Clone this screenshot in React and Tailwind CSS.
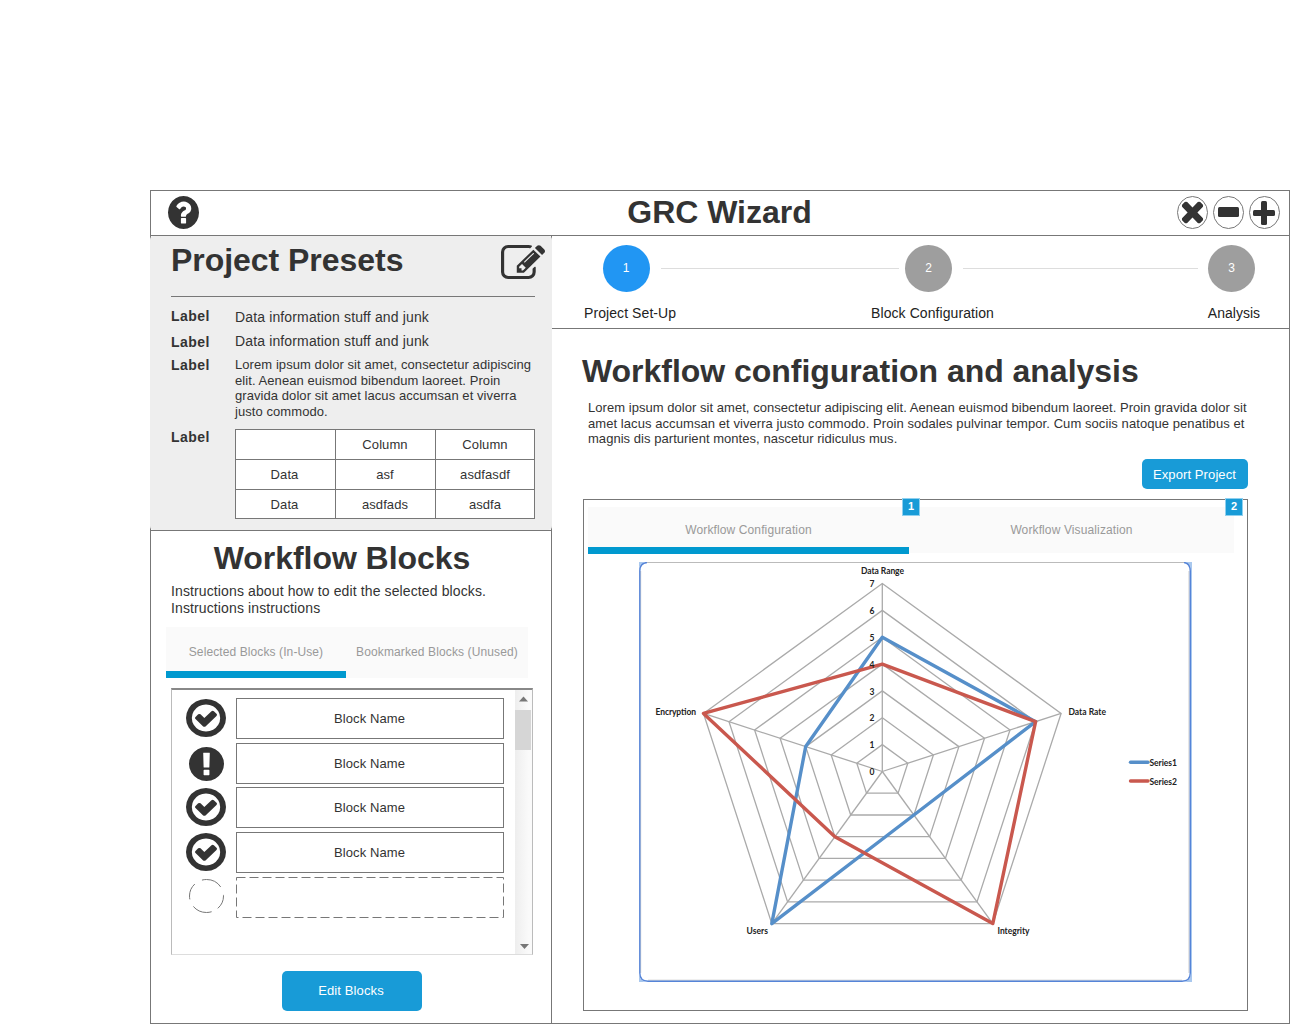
import React from "react";

const CHECK =
  "M1299 813l-422 422q-19 19-45 19t-45-19l-294-294q-19-19-19-45t19-45l102-102q19-19 45-19t45 19l147 147 275-275q19-19 45-19t45 19l102 102q19 19 19 45t-19 45zm141 83q0-148-73-273t-198-198-273-73-273 73-198 198-73 273 73 273 198 198 273 73 273-73 198-198 73-273zm224 0q0 209-103 385.5T1281.5 1561 896 1664t-385.5-103T231 1281.5 128 896t103-385.5T510.5 231 896 128t385.5 103T1561 510.5 1664 896z";
const ALERT =
  "M896 128q209 0 385.500 103T1561 510.500 1664 896t-103 385.500-279.500 279.500T896 1664t-385.500-103T231 1281.500 128 896t103-385.500T510.500 231 896 128zm128 1247v-190q0-14-9-23.500t-22-9.500H801q-13 0-23 10t-10 23v190q0 13 10 23t23 10h192q13 0 22-9.500t9-23.500zm-2-344l18-621q0-12-10-18-10-8-24-8H786q-14 0-24 8-10 6-10 18l17 621q0 10 10 17.500t24 7.500h185q14 0 23.500-7.500t10.500-17.500z";
const HELP =
  "M1024 1376v-192q0-14-9-23t-23-9H800q-14 0-23 9t-9 23v192q0 14 9 23t23 9h192q14 0 23-9t9-23zm256-672q0-88-55.500-163T1086 425t-170-41q-243 0-371 213-15 24 8 42l132 100q7 6 19 6 16 0 25-12 53-68 86-92 34-24 86-24 48 0 85.500 26t37.500 59q0 38-20 61t-68 45q-63 28-115.500 86.500T768 1020v36q0 14 9 23t23 9h192q14 0 23-9t9-23q0-19 21.500-49.500T1100 957q32-18 49-28.500t46-35 44.500-48 28-60.500 12.500-81zm384 192q0 209-103 385.500T1281.500 1561 896 1664t-385.500-103T231 1281.500 128 896t103-385.500T510.500 231 896 128t385.500 103T1561 510.500 1664 896z";
const EDIT =
  "M888 1184l116-116-152-152-116 116v56h96v96h56zm440-720q-16-16-33 1L945 815q-17 17-1 33t33-1l350-350q17-17 1-33zm80 594v190q0 119-84.500 203.500T1120 1536H288q-119 0-203.500-84.500T0 1248V416q0-119 84.500-203.500T288 128h832q63 0 117 25 15 7 18 23 3 17-9 29l-49 49q-14 14-32 8-23-6-45-6H288q-66 0-113 47t-47 113v832q0 66 47 113t113 47h832q66 0 113-47t47-113v-126q0-13 9-22l64-64q15-15 35-7t20 29zm-96-738l288 288-672 672H640V992zm444 132l-92 92-288-288 92-92q28-28 68-28t68 28l152 152q28 28 28 68t-28 68z";
const TIMES =
  "M1490 1322q0 40-28 68l-136 136q-28 28-68 28t-68-28l-294-294-294 294q-28 28-68 28t-68-28l-136-136q-28-28-28-68t28-68l294-294-294-294q-28-28-28-68t28-68l136-136q28-28 68-28t68 28l294 294 294-294q28-28 68-28t68 28l136 136q28 28 28 68t-28 68l-294 294 294 294q28 28 28 68z";

function Glyph({ d, box = "128 128 1536 1536", className }) {
  return (
    <svg viewBox={box} preserveAspectRatio="none" className={className} fill="#333">
      <path d={d} />
    </svg>
  );
}

function WindowButton({ children }) {
  return (
    <svg viewBox="0 0 31 33" className="h-[33px] w-[31px]" fill="#333">
      <ellipse cx="15.500" cy="16.500" rx="15" ry="16" fill="#fff" stroke="#777" />
      {children}
    </svg>
  );
}

function Header() {
  return (
    <header className="grid h-[45px] grid-cols-[1fr_auto_1fr] items-center border-b border-l border-[#777] pb-px pl-[17px] pr-[9px]">
      <Glyph d={HELP} className="h-[33px] w-[31px]" />
      <h1 className="-mt-px pr-[9px] text-[32px] leading-[36px] font-bold tracking-[-0.03px]">GRC Wizard</h1>
      <div className="flex justify-end gap-[5px]">
        <WindowButton>
          <svg x="4.800" y="5.500" width="21.400" height="22" viewBox="302 366 1188 1188" preserveAspectRatio="none">
            <path d={TIMES} />
          </svg>
        </WindowButton>
        <WindowButton>
          <rect x="5" y="11" width="21" height="10" rx="1.500" />
        </WindowButton>
        <WindowButton>
          <rect x="4" y="14" width="22" height="6" rx="1.500" />
          <rect x="12" y="5" width="6" height="24" rx="1.500" />
        </WindowButton>
      </div>
    </header>
  );
}

function Label({ children }) {
  return <div className="w-[64px] text-[14px] leading-[16px] font-bold tracking-[0.45px]">{children}</div>;
}

const CELLS = ["", "Column", "Column", "Data", "asf", "asdfasdf", "Data", "asdfads", "asdfa"];

function Presets() {
  return (
    <section className="-mx-px h-[294px] rounded-[4px] bg-[#eee] pl-[21px]">
      <div className="flex h-[61px] w-[374px] items-start justify-between border-[#777]">
        <h2 className="pt-[6px] text-[32px] leading-[36px] font-bold tracking-[-0.04px]">Project Presets</h2>
        <Glyph d={EDIT} box="0 128 1784 1408" className="mt-[9px] h-[34px] w-[44px]" />
      </div>
      <div className="-mt-px h-px w-[364px] bg-[#777]" />
      <div className="flex h-[25px] pt-[11px]">
        <Label>Label</Label>
        <p className="pt-px text-[14px] leading-[16px] tracking-[0.14px]">Data information stuff and junk</p>
      </div>
      <div className="flex h-[24px] pt-[12px]">
        <Label>Label</Label>
        <p className="-mt-px text-[14px] leading-[16px] tracking-[0.14px]">Data information stuff and junk</p>
      </div>
      <div className="flex h-[72px] pt-[11px]">
        <Label>Label</Label>
        <p className="text-[13px] leading-[15.600px] tracking-[0.07px] whitespace-nowrap">
          Lorem ipsum dolor sit amet, consectetur adipiscing
          <br />
          elit. Aenean euismod bibendum laoreet. Proin
          <br />
          gravida dolor sit amet lacus accumsan et viverra
          <br />
          justo commodo.
        </p>
      </div>
      <div className="flex pt-[11px]">
        <Label>Label</Label>
        <div className="grid h-[90px] w-[300px] grid-cols-[100px_100px_98px] grid-rows-[30px_30px_28px] border border-[#777] bg-white text-[13px] leading-[16px] tracking-[0.08px]">
          {CELLS.map((text, i) => (
            <div
              key={i}
              className={
                "flex items-center justify-center border-[#777] " +
                (i % 3 === 0 ? "border-r pr-[2px] " : i % 3 === 1 ? "border-r pr-px " : "") +
                (i < 6 ? "border-b" : "pt-[2px]")
              }
            >
              {text}
            </div>
          ))}
        </div>
      </div>
    </section>
  );
}

const BLOCKS = [
  { icon: CHECK, iconClass: "h-[38px] w-[40px]", rowClass: "h-[45px]", pad: "pt-px pl-[14px]" },
  { icon: ALERT, iconClass: "h-[34px] w-[35px]", rowClass: "h-[44px]", pad: "pt-[4px] pl-[17px]" },
  { icon: CHECK, iconClass: "h-[38px] w-[40px]", rowClass: "h-[45px]", pad: "pt-px pl-[14px]" },
  { icon: CHECK, iconClass: "h-[38px] w-[40px]", rowClass: "h-[45px]", pad: "pt-px pl-[14px]" },
];

function BlockList() {
  return (
    <div className="mt-[10px] ml-[20px] flex h-[267px] w-[362px] border border-t-2 border-[#bbb] border-t-[#888] border-b-[#ddd]">
      <div className="w-[343px] pt-[8px]">
        {BLOCKS.map((b, i) => (
          <div key={i} className={"flex " + b.rowClass}>
            <div className={"w-[64px] " + b.pad}>
              <Glyph d={b.icon} className={b.iconClass} />
            </div>
            <div className="flex h-[41px] w-[268px] items-center justify-center border border-[#777] pr-px text-[13px] tracking-[0.1px]">
              Block Name
            </div>
          </div>
        ))}
        <div className="flex">
          <div className="w-[64px] pt-[2px] pl-[17px]">
            <svg viewBox="0 0 35 34" className="h-[34px] w-[35px]" fill="none" stroke="#777">
              <ellipse
                cx="17.500"
                cy="17"
                rx="17"
                ry="16.500"
                pathLength="360"
                strokeDasharray="52 24 69 27 58 28 73 29"
                strokeDashoffset="4"
              />
            </svg>
          </div>
          <svg viewBox="0 0 268 41" className="h-[41px] w-[268px]" fill="none" stroke="#777">
            <rect x="0.500" y="0.500" width="267" height="40" strokeDasharray="9 4" />
          </svg>
        </div>
      </div>
      <div className="flex w-[17px] flex-col items-start bg-linear-to-r from-[#eee] to-[#fafafa] to-80%">
        <svg viewBox="0 0 17 20" className="h-[20px] w-[17px]" fill="#777">
          <path d="M4 11.500 8.500 6.500 13 11.500z" />
        </svg>
        <div className="h-[40px] w-[16px] bg-[#d6d6d6]" />
        <div className="grow" />
        <svg viewBox="0 0 17 20" className="h-[20px] w-[17px]" fill="#777">
          <path d="M5 10 14 10 9.500 15z" />
        </svg>
      </div>
    </div>
  );
}

function Blocks() {
  return (
    <section className="flex h-[493px] flex-col border-t border-[#777]">
      <h2 className="mt-[9px] pr-[18px] text-center text-[32px] leading-[36px] font-bold tracking-[-0.04px]">
        Workflow Blocks
      </h2>
      <p className="mt-[7px] ml-[20px] text-[14px] leading-[17px] tracking-[0.12px] whitespace-nowrap">
        Instructions about how to edit the selected blocks.
        <br />
        Instructions instructions
      </p>
      <div className="mt-[10px] ml-[15px] flex h-[51px] w-[362px] bg-[#fafafa] text-[12px] tracking-[0.1px] text-[#999]">
        <div className="flex w-[180px] items-center justify-center border-b-[7px] border-[#0099cf] pt-[6px] whitespace-nowrap">
          Selected Blocks (In-Use)
        </div>
        <div className="flex grow items-center justify-center pb-px tracking-[0.12px] whitespace-nowrap">
          Bookmarked Blocks (Unused)
        </div>
      </div>
      <BlockList />
      <button className="mt-[16px] ml-[131px] h-[40px] w-[140px] rounded-[5px] bg-[#189bd7] pr-[2px] text-[13px] tracking-[0.13px] text-white">
        Edit Blocks
      </button>
    </section>
  );
}

function Steps() {
  return (
    <section className="h-[93px] border-b border-[#777] pt-[9px] text-[14px] text-[#222]">
      <div className="flex items-center pl-[51px] text-[12px] text-white">
        <div className="flex size-[47px] items-center justify-center rounded-full bg-[#2196f3] pr-px pb-[2px]">1</div>
        <div className="ml-[11px] h-px w-[238px] bg-[#ddd]" />
        <div className="ml-[6px] flex size-[47px] items-center justify-center rounded-full bg-[#9e9e9e] pb-[2px]">2</div>
        <div className="ml-[11px] h-px w-[235px] bg-[#ddd]" />
        <div className="ml-[10px] flex size-[47px] items-center justify-center rounded-full bg-[#9e9e9e] pb-[2px]">3</div>
      </div>
      <div className="mt-[13px] flex justify-between pr-[29px] pl-[32px] leading-[16px] tracking-[0.08px]">
        <span>Project Set-Up</span>
        <span className="-ml-[19px]">Block Configuration</span>
        <span className="tracking-[0px]">Analysis</span>
      </div>
    </section>
  );
}

const CX = 243.3;
const CY = 209.5;
const STEP = 188 / 7;
const point = (axis, value) => {
  const a = (axis * 2 * Math.PI) / 5;
  return [CX + Math.sin(a) * value * STEP, CY - Math.cos(a) * value * STEP];
};
const ring = (values) => values.map((v, i) => point(i, v).map((n) => n.toFixed(1)).join(",")).join(" ");

function Radar() {
  return (
    <svg
      viewBox="0 0 553 420"
      className="mt-[8px] ml-[55px] h-[420px] w-[553px] font-['Lato',sans-serif] text-[8.500px] font-bold"
      fill="none"
    >
      <rect width="553" height="420" fill="#a9c8ee" />
      <rect x="0" y="0" width="552" height="420" rx="8" fill="#fff" />
      <path d="M1.700 9V411M9 418.200H543M550 411V9" stroke="#ccc" />
      <path d="M8 .5H545" stroke="#bbb" />
      <path
        d="M8 .5Q.8 1 .8 9V411Q.8 419 9 419.300H543Q551.300 419 551.300 411V9Q551 1 545 .5"
        stroke="#5584d8"
        strokeWidth="1.400"
      />
      <g stroke="#aaa" strokeWidth="1.300">
        {[1, 2, 3, 4, 5, 6, 7].map((v) => (
          <polygon key={v} points={ring([v, v, v, v, v])} />
        ))}
        {[0, 1, 2, 3, 4].map((axis) => {
          const [x, y] = point(axis, 7);
          return <line key={axis} x1={CX} y1={CY} x2={x} y2={y} />;
        })}
      </g>
      <g strokeWidth="3.400" strokeLinejoin="round" strokeLinecap="round">
        <polygon points={ring([5, 6, 2, 7, 3])} stroke="#568fc9" />
        <polygon points={ring([4, 6, 7, 3, 7])} stroke="#c9584e" />
        <path d="M491.500 200.300H509" stroke="#568fc9" />
        <path d="M491.500 219H509" stroke="#c9584e" />
      </g>
      <g fill="#222">
        {[0, 1, 2, 3, 4, 5, 6, 7].map((v) => (
          <text key={v} x="233" y={CY + 3.7 - v * STEP} textAnchor="middle">
            {v}
          </text>
        ))}
        <text x="222" y="12" textLength="43">Data Range</text>
        <text x="429.500" y="153" textLength="37.500">Data Rate</text>
        <text x="358.500" y="372" textLength="32">Integrity</text>
        <text x="107.500" y="372" textLength="21.500">Users</text>
        <text x="16.500" y="153" textLength="40.500">Encryption</text>
        <text x="510.500" y="204" textLength="27.500">Series1</text>
        <text x="510.500" y="222.500" textLength="27.500">Series2</text>
      </g>
    </svg>
  );
}

function Badge({ children }) {
  return (
    <span className="absolute -top-[9px] -right-[11px] z-10 flex size-[18px] items-center justify-center border border-[#8fd0ef] bg-[#189bd7] text-[11px] leading-none font-bold text-white">
      {children}
    </span>
  );
}

function Analysis() {
  return (
    <section className="pl-[30px]">
      <h2 className="mt-[24px] text-[32px] leading-[36px] font-bold tracking-[-0.03px]">
        Workflow configuration and analysis
      </h2>
      <p className="mt-[11px] ml-[6px] text-[13px] leading-[15.600px] tracking-[0.042px] whitespace-nowrap">
        Lorem ipsum dolor sit amet, consectetur adipiscing elit. Aenean euismod bibendum laoreet. Proin gravida dolor sit
        <br />
        <span className="tracking-[0.07px]">
          amet lacus accumsan et viverra justo commodo. Proin sodales pulvinar tempor. Cum sociis natoque penatibus et
        </span>
        <br />
        magnis dis parturient montes, nascetur ridiculus mus.
      </p>
      <div className="mt-[12px] flex w-[666px] justify-end">
        <button className="h-[30px] w-[106px] rounded-[5px] bg-[#189bd7] pt-px pr-px text-[13px] tracking-[0.1px] text-white">
          Export Project
        </button>
      </div>
      <div className="mt-[10px] ml-px h-[512px] w-[665px] border border-[#777] pt-[7px]">
        <div className="ml-[4px] flex h-[47px] w-[646px] text-[12px] tracking-[0.12px] text-[#999]">
          <div className="relative flex w-[321px] items-center justify-center border-b-[7px] border-[#0099cf] bg-[#fafafa] pt-[6px]">
            Workflow Configuration
            <Badge>1</Badge>
          </div>
          <div className="relative mb-px flex grow items-center justify-center bg-[#fafafa]">
            Workflow Visualization
            <span className="absolute top-0 right-[2px]">
              <Badge>2</Badge>
            </span>
          </div>
        </div>
        <Radar />
      </div>
    </section>
  );
}

export default function App() {
  return (
    <div className="h-[1024px] w-[1290px] overflow-hidden bg-white pt-[190px] pl-[150px] font-['Liberation_Sans',Arial,sans-serif] text-[#333]">
      <div className="h-[834px] w-[1140px] border-y border-r border-[#777]">
        <Header />
        <div className="flex">
          <aside className="h-[787px] w-[402px] shrink-0 border-x border-[#777]">
            <Presets />
            <Blocks />
          </aside>
          <main className="grow">
            <Steps />
            <Analysis />
          </main>
        </div>
      </div>
    </div>
  );
}
